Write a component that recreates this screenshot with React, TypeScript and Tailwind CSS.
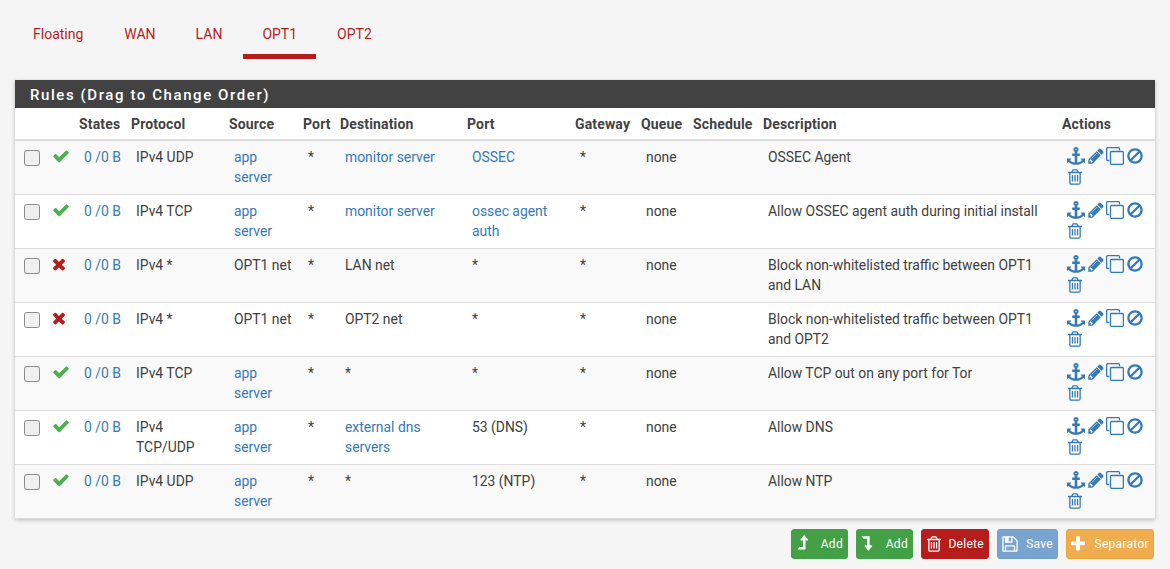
type Rule = {
  pass: boolean;
  protocol: string;
  source: string;
  sourceLink?: boolean;
  dest: string;
  destLink?: boolean;
  port: string;
  portLink?: boolean;
  description: string;
};

const rules: Rule[] = [
  { pass: true, protocol: "IPv4 UDP", source: "app server", sourceLink: true, dest: "monitor server", destLink: true, port: "OSSEC", portLink: true, description: "OSSEC Agent" },
  { pass: true, protocol: "IPv4 TCP", source: "app server", sourceLink: true, dest: "monitor server", destLink: true, port: "ossec agent auth", portLink: true, description: "Allow OSSEC agent auth during initial install" },
  { pass: false, protocol: "IPv4 *", source: "OPT1 net", dest: "LAN net", port: "*", description: "Block non-whitelisted traffic between OPT1 and LAN" },
  { pass: false, protocol: "IPv4 *", source: "OPT1 net", dest: "OPT2 net", port: "*", description: "Block non-whitelisted traffic between OPT1 and OPT2" },
  { pass: true, protocol: "IPv4 TCP", source: "app server", sourceLink: true, dest: "*", port: "*", description: "Allow TCP out on any port for Tor" },
  { pass: true, protocol: "IPv4 TCP/UDP", source: "app server", sourceLink: true, dest: "external dns servers", destLink: true, port: "53 (DNS)", description: "Allow DNS" },
  { pass: true, protocol: "IPv4 UDP", source: "app server", sourceLink: true, dest: "*", port: "123 (NTP)", description: "Allow NTP" },
];

const tabs = ["Floating", "WAN", "LAN", "OPT1", "OPT2"];
const headers = ["", "", "States", "Protocol", "Source", "Port", "Destination", "Port", "Gateway", "Queue", "Schedule", "Description", "Actions"];
const widths = [32, 32, 52, 98, 74, 37, 127, 108, 66, 52, 70, 299, 93];

// font awesome 4 glyphs
const icons = {
  check: "M1671 566q0 40-28 68l-724 724-136 136q-28 28-68 28t-68-28l-136-136-362-362q-28-28-28-68t28-68l136-136q28-28 68-28t68 28l294 295 656-657q28-28 68-28t68 28l136 136q28 28 28 68z",
  times: "M1490 1322q0 40-28 68l-136 136q-28 28-68 28t-68-28l-294-294-294 294q-28 28-68 28t-68-28l-136-136q-28-28-28-68t28-68l294-294-294-294q-28-28-28-68t28-68l136-136q28-28 68-28t68 28l294 294 294-294q28-28 68-28t68 28l136 136q28 28 28 68t-28 68l-294 294 294 294q28 28 28 68z",
  pencil: "M491 1536l91-91-235-235-91 91v107h128v128h107zm523-928q0-22-22-22-10 0-17 7l-542 542q-7 7-7 17 0 22 22 22 10 0 17-7l542-542q7-7 7-17zm-54-192l416 416-832 832h-416v-416zm683 96q0 53-37 90l-166 166-416-416 166-165q36-38 90-38 53 0 91 38l235 234q37 39 37 91z",
  trash: "M704 736v576q0 14-9 23t-23 9h-64q-14 0-23-9t-9-23v-576q0-14 9-23t23-9h64q14 0 23 9t9 23zm256 0v576q0 14-9 23t-23 9h-64q-14 0-23-9t-9-23v-576q0-14 9-23t23-9h64q14 0 23 9t9 23zm256 0v576q0 14-9 23t-23 9h-64q-14 0-23-9t-9-23v-576q0-14 9-23t23-9h64q14 0 23 9t9 23zm128 724v-948h-896v948q0 22 7 40.5t14.5 27 10.5 8.5h832q3 0 10.5-8.5t14.5-27 7-40.5zm-672-1076h448l-48-117q-7-9-17-11h-317q-10 2-17 11zm928 32v64q0 14-9 23t-23 9h-96v948q0 83-47 143.5t-113 60.5h-832q-66 0-113-58.5t-47-141.5v-952h-96q-14 0-23-9t-9-23v-64q0-14 9-23t23-9h309l70-167q15-37 54-63t79-26h320q40 0 79 26t54 63l70 167h309q14 0 23 9t9 23z",
  ban: "M1440 893q0-161-87-295l-754 753q137 89 297 89 111 0 211.5-43.5t173.5-116.5 116-174.5 43-212.5zm-999 299l755-754q-135-91-300-91-148 0-273 73t-198 199-73 274q0 162 89 299zm1223-299q0 157-61 300t-163.5 246-245 164-298.5 61-298.5-61-245-164-163.5-246-61-300 61-299.5 163.5-245.5 245-164 298.5-61 298.5 61 245 164 163.5 245.5 61 299.5z",
  clone: "M1664 1632v-1088q0-13-9.5-22.5t-22.5-9.5h-1088q-13 0-22.5 9.5t-9.5 22.5v1088q0 13 9.5 22.5t22.5 9.5h1088q13 0 22.5-9.5t9.5-22.5zm128-1088v1088q0 66-47 113t-113 47h-1088q-66 0-113-47t-47-113v-1088q0-66 47-113t113-47h1088q66 0 113 47t47 113zm-384-384v160h-128v-160q0-13-9.5-22.5t-22.5-9.5h-1088q-13 0-22.5 9.5t-9.5 22.5v1088q0 13 9.5 22.5t22.5 9.5h160v128h-160q-66 0-113-47t-47-113v-1088q0-66 47-113t113-47h1088q66 0 113 47t47 113z",
  save: "M512 1536h768v-384h-768v384zm896 0h128v-896q0-14-10-38.5t-20-34.5l-281-281q-10-10-34-20t-39-10v416q0 40-28 68t-68 28h-576q-40 0-68-28t-28-68v-416h-128v1280h128v-416q0-40 28-68t68-28h832q40 0 68 28t28 68v416zm-384-928v-320q0-13-9.5-22.5t-22.5-9.5h-192q-13 0-22.5 9.5t-9.5 22.5v320q0 13 9.5 22.5t22.5 9.5h192q13 0 22.5-9.5t9.5-22.5zm640 32v928q0 40-28 68t-68 28h-1344q-40 0-68-28t-28-68v-1344q0-40 28-68t68-28h928q40 0 88 20t76 48l280 280q28 28 48 76t20 88z",
  plus: "M1600 736v192q0 40-28 68t-68 28h-416v416q0 40-28 68t-68 28h-192q-40 0-68-28t-28-68v-416h-416q-40 0-68-28t-28-68v-192q0-40 28-68t68-28h416v-416q0-40 28-68t68-28h192q40 0 68 28t28 68v416h416q40 0 68 28t28 68z",
  up: "M1395 508q-18 36-58 36h-192v864q0 14-9 23t-23 9h-704q-21 0-29-18-8-20 4-35l160-192q9-11 25-11h320v-640h-192q-40 0-58-36-17-37 9-69l320-384q18-22 49-22t49 22l320 384q27 32 9 69z",
  down: "M1412 1548q18 37-9 69l-320 384q-18 22-49 22t-49-22l-320-384q-26-31-9-69 18-36 58-36h192v-640h-320q-14 0-25-11l-160-192q-13-14-4-34 9-19 29-19h704q13 0 22.5 9.5t9.5 22.5v864h192q40 0 58 36z",
  anchor: "M960 256q0-26-19-45t-45-19-45 19-19 45 19 45 45 19 45-19 19-45zm832 928v352q0 22-20 30-8 2-12 2-12 0-23-9l-93-93q-119 143-318.5 226.5t-429.5 83.5-429.5-83.5-318.5-226.5l-93 93q-9 9-23 9-4 0-12-2-20-8-20-30v-352q0-14 9-23t23-9h352q22 0 30 20 8 19-7 35l-100 100q67 91 189.5 153.5t271.5 82.5v-647h-192q-26 0-45-19t-19-45v-128q0-26 19-45t45-19h192v-163q-58-34-93-92.5t-35-128.5q0-106 75-181t181-75 181 75 75 181q0 70-35 128.5t-93 92.5v163h192q26 0 45 19t19 45v128q0 26-19 45t-45 19h-192v647q149-20 271.5-82.5t189.5-153.5l-100-100q-15-16-7-35 8-20 30-20h352q14 0 23 9t9 23z",
};

function Fa({ name, className }: { name: keyof typeof icons; className?: string }) {
  return (
    <svg viewBox={name === "down" ? "0 488 1792 1792" : "0 0 1792 1792"} fill="currentColor" className={`block h-[18px] w-[18px] shrink-0 ${className ?? ""}`}>
      <path d={icons[name]} />
    </svg>
  );
}

function Cell({ text, link, nowrap }: { text: string; link?: boolean; nowrap?: boolean }) {
  return <td className={`pl-[5px] pr-[10px] pt-[6px] align-top text-[13.9px] ${nowrap ? "whitespace-nowrap" : ""}`}><span className={link ? "text-[#337ab7]" : ""}>{text}</span></td>;
}

function Btn({ className, icon, children }: { className: string; icon: keyof typeof icons; children: string }) {
  return (
    <button className={`flex h-[30px] items-center justify-between rounded-[3px] border pr-[4px] ${className}`}>
      <Fa name={icon} />
      <span className="tracking-[0.3px]">{children}</span>
    </button>
  );
}

function tabClass(t: string) {
  if (t === "OPT1") return "mx-px border-[#b71c1c] px-[19px]";
  if (t === "WAN") return "ml-px border-transparent px-5";
  return "border-transparent px-5";
}

export default function App() {
  return (
    <div className="h-[569px] overflow-hidden bg-[#f5f5f5] font-['Roboto',sans-serif] text-[14px] leading-[20px] text-[#404040]">
      <nav className="flex h-[59px] pl-[13px]">
        {tabs.map((t) => (
          <a key={t} className={`h-[59px] border-b-[5px] pt-[24px] text-[#b71c1c] ${tabClass(t)}`}>{t}</a>
        ))}
      </nav>

      <section className="mx-[15px] mt-[21px] bg-white shadow-[0_1px_4px_rgba(0,0,0,0.25)]">
        <h2 className="flex h-[28px] items-center bg-[#424242] pl-[15px] pt-px text-[15px] font-medium tracking-[1.58px] text-white">Rules (Drag to Change Order)</h2>
        <table className="w-[1140px] table-fixed border-collapse">
          <colgroup>
            {widths.map((w, i) => <col key={i} style={{ width: w }} />)}
          </colgroup>
          <thead>
            <tr className="h-[32px] border-b-2 border-[#dedede]">
              {headers.map((h, i) => <th key={i} className="text-left font-bold tracking-[0.15px] text-[#424242]">{h}</th>)}
            </tr>
          </thead>
          <tbody>
            {rules.map((r, i) => (
              <tr key={i} className={`h-[54px] border-b border-[#dedede] ${i % 2 === 0 ? "bg-[#f9f9f9]" : "bg-white"}`}>
                <td className="pl-[9px] pt-[9px] align-top">
                  <div className="h-4 w-4 rounded-[3px] border border-[#8a8a8a] bg-[#f0f0f0]" />
                </td>
                <td className="pl-[5px] pt-[6px] align-top">
                  {r.pass ? <Fa name="check" className="text-[#4caf50]" /> : <Fa name="times" className="-ml-[2px] text-[#b71c1c]" />}
                </td>
                <Cell text="0 /0 B" link nowrap />
                <Cell text={r.protocol} />
                <Cell text={r.source} link={r.sourceLink} />
                <Cell text="*" />
                <Cell text={r.dest} link={r.destLink} />
                <Cell text={r.port} link={r.portLink} />
                <Cell text="*" />
                <Cell text="none" />
                <Cell text="" />
                <Cell text={r.description} />
                <td className="pl-[5px] pt-[6px] align-top text-[#337ab7]">
                  <div className="flex items-center gap-[2px]">
                    <Fa name="anchor" />
                    <Fa name="pencil" />
                    <Fa name="clone" className="-ml-px" />
                    <Fa name="ban" />
                  </div>
                  <Fa name="trash" className="-ml-px mt-[3px]" />
                </td>
              </tr>
            ))}
          </tbody>
        </table>
      </section>

      <div className="mr-4 mt-[10px] flex justify-end gap-2 text-[12px] text-white">
        <Btn className="w-[57px] border-[#43a047] bg-[#43a047] pl-[2px]" icon="up">Add</Btn>
        <Btn className="w-[57px] border-[#43a047] bg-[#43a047] pl-px" icon="down">Add</Btn>
        <Btn className="w-[68px] border-[#b71c1c] bg-[#b71c1c] pl-[3px]" icon="trash">Delete</Btn>
        <Btn className="w-[61px] border-[#6f9fcc] bg-[#78a4cf] pl-[3px]" icon="save">Save</Btn>
        <Btn className="w-[88px] border-[#eea236] bg-[#f0ad4e] pl-[2px]" icon="plus">Separator</Btn>
      </div>
    </div>
  );
}
